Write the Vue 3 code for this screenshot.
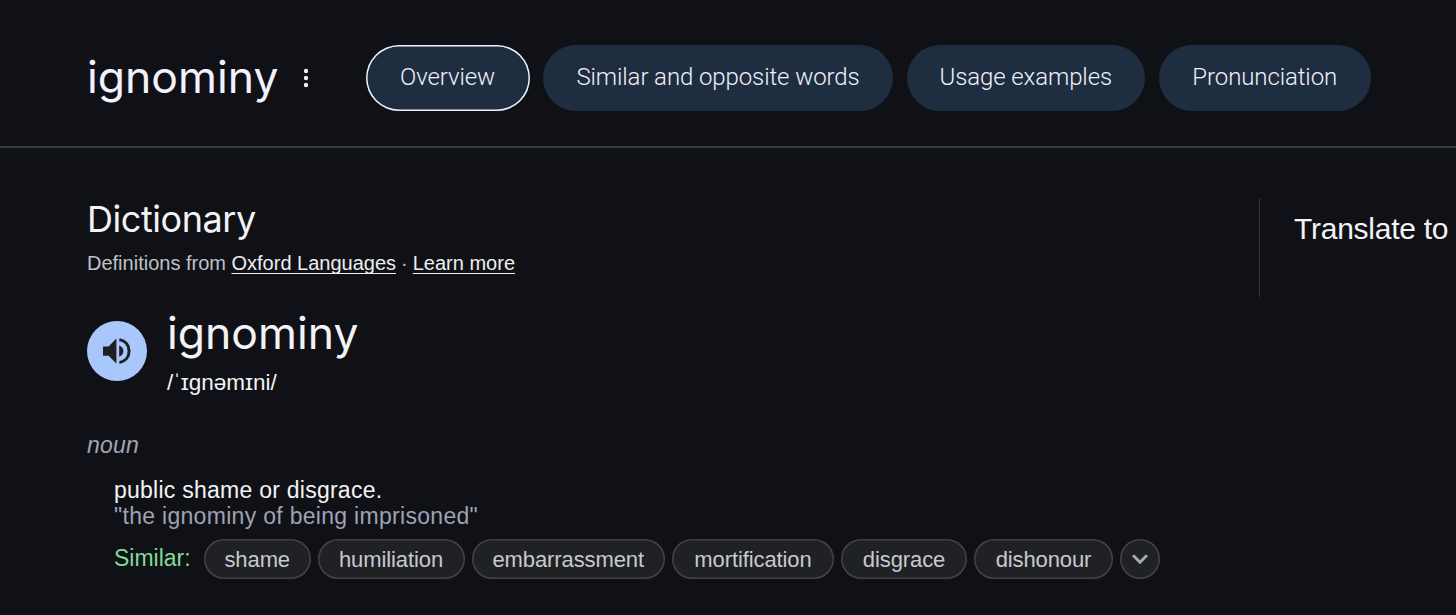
<template>
  <div class="page">
    <!-- header -->
    <header class="header">
      <h1 class="title">ignominy</h1>
      <button class="more" aria-label="More">
        <svg viewBox="0 0 6 20" width="6" height="20">
          <circle cx="3" cy="3" r="2.2" />
          <circle cx="3" cy="10" r="2.2" />
          <circle cx="3" cy="17" r="2.2" />
        </svg>
      </button>
      <nav class="tabs">
        <button
          v-for="(tab, index) in tabs"
          :key="tab.label"
          class="tab"
          :class="{ active: currentTab === index }"
          :style="{ width: tab.width + 'px' }"
          @click="currentTab = index"
        >
          {{ tab.label }}
        </button>
      </nav>
    </header>

    <main class="main">
      <section class="dictionary">
        <h2 class="heading">Dictionary</h2>
        <p class="source">
          Definitions from <a>Oxford Languages</a><span class="sep">·</span><a>Learn more</a>
        </p>

        <div class="entry">
          <button class="speaker" aria-label="Listen">
            <svg viewBox="0 0 28 28" width="28" height="28">
              <path d="M0 9.4h5.600L13.400 1.600v25l-7.800-7.800H0z" />
              <path d="M16.200 8.400c2.700 1 4.200 3.100 4.200 5.700s-1.500 4.700-4.200 5.700z" />
              <path
                d="M16.400 2.600C22.400 3.800 26.100 8.200 26.100 14.100S22.400 24.400 16.400 25.600"
                class="wave"
              />
            </svg>
          </button>
          <div>
            <div class="word">ignominy</div>
            <div class="ipa">/ˈɪɡnəmɪni/</div>
          </div>
        </div>

        <div class="pos">noun</div>

        <div class="sense">
          <p class="definition">public shame or disgrace.</p>
          <p class="example">"the ignominy of being imprisoned"</p>
          <div class="similar">
            <span class="label">Similar:</span>
            <span
              v-for="item in similar"
              :key="item.word"
              class="chip"
              :style="{ width: item.width + 'px' }"
              >{{ item.word }}</span
            >
            <button class="chip expand" aria-label="Show more">
              <svg viewBox="0 0 16 10" width="16" height="10">
                <path d="M1 1.200L8 8.200L15 1.200" />
              </svg>
            </button>
          </div>
        </div>
      </section>

      <aside class="translate">Translate to</aside>
    </main>
  </div>
</template>

<script setup>
import { ref } from "vue";

const currentTab = ref(0);

const tabs = [
  { label: "Overview", width: 164 },
  { label: "Similar and opposite words", width: 350 },
  { label: "Usage examples", width: 238.5 },
  { label: "Pronunciation", width: 212.5 },
];

const similar = [
  { word: "shame", width: 106.5 },
  { word: "humiliation", width: 147 },
  { word: "embarrassment", width: 193.5 },
  { word: "mortification", width: 162 },
  { word: "disgrace", width: 126 },
  { word: "dishonour", width: 139 },
];
</script>

<style>
body {
  margin: 0;
  background: #101116;
}
</style>

<style scoped>
.page {
  height: 615px;
  overflow: hidden;
  background: #101116;
  color: #f3f3f5;
  font-family: "Liberation Sans", Arial, sans-serif;
}

h1,
h2,
p {
  margin: 0;
  font-weight: 400;
}

button {
  padding: 0;
  border: none;
  background: none;
  cursor: pointer;
}

/* header */
.header {
  display: flex;
  align-items: flex-start;
  box-sizing: border-box;
  height: 148px;
  padding: 45px 0 0 87px;
  border-bottom: 2px solid #393c3f;
}

.title,
.word {
  font-family: Inter, sans-serif;
  font-size: 44.5px;
  font-weight: 380;
}

.title {
  width: 216px;
  padding-top: 4px;
  line-height: 56px;
  color: #f3f2fc;
}

.more {
  height: 66px;
  display: flex;
  align-items: center;
  fill: #eeeef6;
}

.tabs {
  display: flex;
  gap: 13.5px;
  margin-left: 56.5px;
}

.tab {
  flex: none;
  height: 66px;
  padding-bottom: 2px;
  border-radius: 33px;
  background: #1f2d41;
  color: #eff0fa;
  font-family: Roboto, sans-serif;
  font-size: 24px;
  font-weight: 350;
  letter-spacing: -0.1px;
  white-space: nowrap;
}

.tab.active {
  box-shadow: inset 0 0 0 1.5px #f0f1fa;
}

/* body */
.main {
  display: flex;
  justify-content: space-between;
}

.dictionary {
  padding: 49px 0 0 87px;
}

.heading {
  font-family: Inter, sans-serif;
  font-size: 36px;
  font-weight: 370;
  line-height: 44px;
  letter-spacing: -0.45px;
}

.source {
  margin-top: 8px;
  font-size: 20px;
  line-height: 29px;
  color: #bfc1c8;
}

.source a {
  color: #eeeef2;
  text-decoration: underline;
  text-decoration-thickness: 1px;
  text-underline-offset: 3px;
  text-decoration-skip-ink: none;
}

.sep {
  margin: 0 5px;
}

.entry {
  display: flex;
  gap: 20px;
  margin-top: 22px;
}

.speaker {
  display: flex;
  align-items: center;
  justify-content: center;
  width: 60px;
  height: 60px;
  margin-top: 21px;
  border-radius: 50%;
  background: #a8c7fa;
  fill: #1f2024;
}

.speaker .wave {
  fill: none;
  stroke: #1f2024;
  stroke-width: 3;
}

.word {
  padding-top: 4px;
  line-height: 58px;
}

.ipa {
  margin-top: 6px;
  font-size: 22.5px;
  line-height: 30px;
}

.pos {
  margin-top: 32px;
  font-size: 23px;
  font-style: italic;
  line-height: 30px;
  letter-spacing: 0.2px;
  color: #a2a5b5;
}

.sense {
  padding: 17px 0 0 27px;
  font-size: 23px;
  line-height: 26px;
  letter-spacing: 0.25px;
}

.example {
  letter-spacing: 0.3px;
  color: #9fa2b3;
}

.similar {
  display: flex;
  gap: 7px;
  margin-top: 10px;
}

.label {
  width: 83px;
  line-height: 38px;
  letter-spacing: 0;
  color: #80da99;
}

.chip {
  height: 39.5px;
  border-radius: 20px;
  background: #202125;
  box-shadow: inset 0 0 0 1.5px #404247;
  color: #c8c9ce;
  font-size: 22px;
  line-height: 41px;
  letter-spacing: -0.1px;
  text-align: center;
}

.expand {
  display: flex;
  align-items: center;
  justify-content: center;
  width: 39.5px;
}

.expand path {
  fill: none;
  stroke: #a5a8b5;
  stroke-width: 3;
}

.translate {
  box-sizing: border-box;
  width: 197px;
  height: 99px;
  margin-top: 50px;
  padding-left: 34px;
  border-left: 1px solid #33353a;
  font-size: 30px;
  line-height: 62px;
  letter-spacing: -0.25px;
  white-space: nowrap;
}
</style>
